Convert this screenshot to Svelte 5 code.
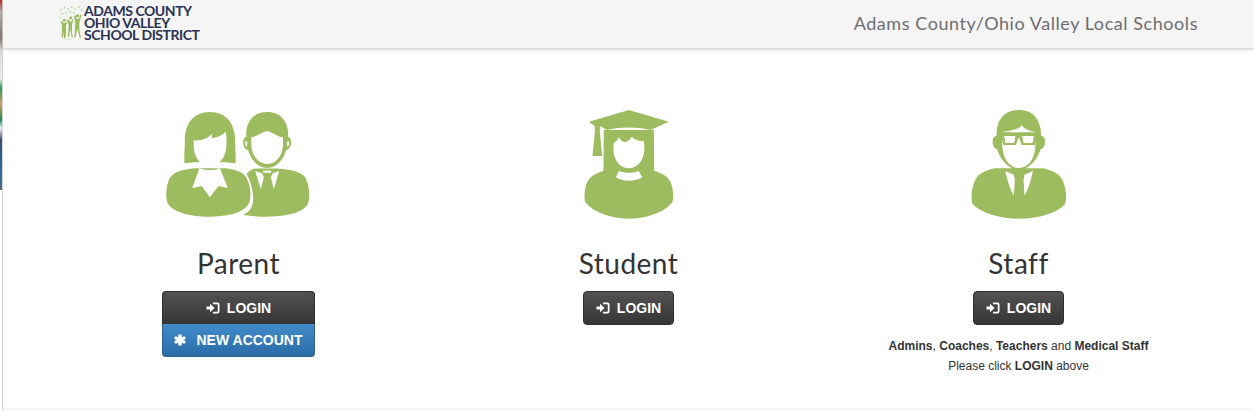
<script>
	const schools = 'Adams County/Ohio Valley Local Schools';
</script>

{#snippet loginIcon()}
	<svg class="glyph" viewBox="0 0 14 14" aria-hidden="true">
		<path d="M0.5 5.5H4V2.8L8.6 7L4 11.2V8.5H0.5Z" />
		<path d="M7 1.5H11.5Q13.5 1.5 13.5 3.5V10.5Q13.5 12.5 11.5 12.5H7V10.8H11Q11.8 10.8 11.8 10V4Q11.8 3.2 11 3.2H7Z" />
	</svg>
{/snippet}

<div class="screen">
	<div class="edge"></div>
	<div class="page">
		<header>
			<div class="logo">
				<svg class="logo-mark" viewBox="0 0 72 105" aria-hidden="true">
					<g fill="#c5d8a4">
						<circle cx="6" cy="14" r="3" /><circle cx="16" cy="8" r="3" /><circle cx="27" cy="12" r="3" />
						<circle cx="38" cy="6" r="3" /><circle cx="48" cy="11" r="3" /><circle cx="60" cy="7" r="3" />
						<circle cx="68" cy="14" r="3" /><circle cx="10" cy="26" r="3" /><circle cx="22" cy="24" r="3" />
						<circle cx="34" cy="20" r="3" /><circle cx="44" cy="24" r="3" /><circle cx="4" cy="38" r="2.5" />
					</g>
					<g fill="#9dbc60">
						<path d="M10 48l4 6h6l4-6 2 2-5 10v30l-3 10h-3l-2-18-2 16H8l1-38-4-10Z" />
						<path d="M30 42l3 8h4l3-8 3 1-4 16v24l3 14h-4l-4-24-4 24h-3l2-38-4-14Z" />
						<path d="M50 30l3 12h6l6-14 3 2-7 22v24l5 22h-4l-7-26-6 26h-3l3-44-4-20Z" />
						<circle cx="16" cy="46" r="4.5" /><circle cx="35" cy="38" r="4.5" /><circle cx="56" cy="32" r="5" />
					</g>
					<path d="M6 95Q18 106 40 102" fill="none" stroke="#d5e3bf" stroke-width="2" />
				</svg>
				<div class="logo-text">
					<span>ADAMS COUNTY</span>
					<span>OHIO VALLEY</span>
					<span>SCHOOL DISTRICT</span>
				</div>
			</div>
			<div class="title">{schools}</div>
		</header>

		<main>
			<section>
				<svg class="figure" viewBox="-4.5 0 540 390" aria-hidden="true">
					<path class="g" d="M178 36C128 36 103 72 103 122C103 150 100 172 102 190L135 187L222 187L255 190C257 172 254 150 254 122C254 72 228 36 178 36Z" />
					<path class="g" d="M130 205C90 211 62 216 53 245C46 270 44 298 54 314C78 343 138 350 178 350C222 350 272 342 292 316C306 298 300 255 287 232C276 214 250 209 226 205Z" />
					<path class="w" d="M130 121C152 122 172 118 186 99L183 115C200 112 216 105 226 95C229 115 229 135 226 152C220 180 200 199 178 199C156 199 136 180 131 152C129 140 129 130 130 121Z" />
					<path class="w" d="M147 204C156 212 200 212 208 204L232 264L204 258L178 292L153 258L125 265Z" />
					<path class="g" d="M350 36C305 36 285 70 287 110C274 113 274 148 293 150C300 176 320 204 350 204C380 204 400 176 407 150C426 148 426 113 413 110C415 70 395 36 350 36Z" />
					<path class="w" d="M303 112C320 109 335 96 350 92C365 96 380 109 397 112C399 128 397 145 394 156C386 178 370 192 350 192C330 192 314 178 306 156C303 145 301 128 303 112Z" />
					<path class="w" d="M285 123C283 129 284 137 289 141L291 126ZM415 123C417 129 416 137 411 141L409 126Z" />
					<path class="g" d="M310 206C322 205 378 205 392 206C420 210 452 214 464 232C476 254 482 296 470 316C450 342 396 350 350 350C325 350 300 348 278 345C298 335 310 320 308 290C306 262 298 238 288 222C295 214 302 208 310 206Z" />
					<path class="w" d="M314 213L334 220L340 232L331 268ZM386 213L367 220L361 232L370 268Z" />
					<path class="w" d="M338 212H362V218H338Z" />
				</svg>
				<h2>Parent</h2>
				<div class="stack">
					<a class="btn dark wide" href="#login">{@render loginIcon()}LOGIN</a>
					<a class="btn blue wide" href="#new">
						<svg class="glyph star" viewBox="0 0 14 14" aria-hidden="true">
							<path d="M5 0.5H9V4.2L12 2.2L14 5.5L10.8 7L14 8.5L12 11.8L9 9.8V13.5H5V9.8L2 11.8L0 8.5L3.2 7L0 5.5L2 2.2L5 4.2Z" />
						</svg>
						NEW ACCOUNT
					</a>
				</div>
			</section>

			<section>
				<svg class="figure narrow" viewBox="-4.5 0 420 390" aria-hidden="true">
					<path class="g" d="M130 90H280L281 200C281 215 282 225 284 232H126C128 225 129 215 129 200Z" />
					<path class="g" d="M85 65L205 30L325 65L270 90C230 80 180 80 140 90L118 78L118 90Z" />
					<path class="g" d="M103 72H115L118 95L125 168H96L103 95Z" />
					<path class="w" d="M160 128C166 127 170 122 174 112C180 120 185 125 192 127C200 125 208 120 214 110C224 122 240 124 250 122C253 140 252 158 247 172C240 192 224 205 205 205C186 205 170 192 163 172C158 158 158 142 160 128Z" />
					<path class="g" d="M130 212C110 218 90 226 80 246C72 265 70 290 74 306C100 340 160 356 205 356C250 356 310 340 336 306C340 290 338 265 330 246C320 226 300 218 280 212Z" />
					<path class="w" d="M176 212C186 220 224 220 234 212L245 232C225 246 186 246 166 232Z" />
				</svg>
				<h2>Student</h2>
				<a class="btn dark solo" href="#login">{@render loginIcon()}LOGIN</a>
			</section>

			<section>
				<svg class="figure narrow" viewBox="-4.5 0 420 390" aria-hidden="true">
					<path class="g" d="M205 30C160 30 138 60 138 108C122 108 122 142 140 148C148 178 176 210 205 210C234 210 262 178 270 148C288 142 288 108 272 108C272 60 250 30 205 30Z" />
					<path class="w" d="M156 96C180 92 205 88 214 76C222 88 240 94 254 96C256 115 256 140 252 158C245 188 225 204 205 204C185 204 165 188 158 158C154 140 154 115 156 96Z" />
					<path class="g" d="M150 97H260V104L254 135H214L205 112L196 135H158L152 106Z" />
					<path class="w" d="M161 108H195L191 129H165ZM215 108H250L246 129H219Z" />
					<path class="g" d="M130 205C105 214 85 218 74 240C64 262 60 290 66 312C95 342 155 356 205 356C258 356 318 342 344 312C350 290 346 262 336 240C325 218 305 214 280 205Z" />
					<path class="w" d="M165 213L190 224L193 240L190 286C178 268 170 240 165 213ZM247 213L222 224L219 240L222 286C234 268 242 240 247 213Z" />
				</svg>
				<h2>Staff</h2>
				<a class="btn dark solo" href="#login">{@render loginIcon()}LOGIN</a>
				<div class="note">
					<p><b>Admins</b>, <b>Coaches</b>, <b>Teachers</b> and <b>Medical Staff</b></p>
					<p>Please click <b>LOGIN</b> above</p>
				</div>
			</section>
		</main>
		<footer></footer>
	</div>
</div>

<style>
	:global(body) {
		background: #fff;
	}

	.screen {
		display: flex;
		height: 411px;
		overflow: hidden;
		font-family: 'Liberation Sans', Arial, sans-serif;
	}

	.edge {
		flex: 0 0 3px;
		box-sizing: border-box;
		border-right: 1px solid #d4d4d4;
		background: linear-gradient(
				#c8282a 0,
				#b9b4ac 12px,
				#8a7a70 38px,
				#d8d8d8 50px,
				#eeeeee 78px,
				#2e9a58 88px,
				#d89a5a 104px,
				#1e8a50 120px,
				#eef2f4 128px,
				#33506e 140px,
				#2e6a9c 170px,
				#516c88 190px
			)
			no-repeat 0 0 / 100% 190px;
	}

	.page {
		flex: 1;
		display: flex;
		flex-direction: column;
		min-width: 0;
	}

	header {
		display: flex;
		align-items: flex-start;
		justify-content: space-between;
		height: 48px;
		padding: 0 56px;
		background: #f5f5f5;
		box-shadow: 0 1px 4px rgba(0, 0, 0, 0.25);
	}

	.logo {
		display: flex;
		align-items: flex-start;
		gap: 1px;
		padding-top: 5px;
	}

	.logo-mark {
		width: 24px;
		height: 35px;
		display: block;
	}

	.logo-text {
		display: flex;
		flex-direction: column;
		font-family: Lato, sans-serif;
		font-weight: 700;
		font-size: 14px;
		line-height: 12px;
		letter-spacing: -0.45px;
		color: #2b3252;
	}

	.title {
		padding-top: 12px;
		font-family: Lato, sans-serif;
		font-size: 18px;
		line-height: 22px;
		letter-spacing: 0.56px;
		color: #6e6e6e;
	}

	main {
		flex: 1;
		display: grid;
		grid-template-columns: repeat(3, 390px);
		justify-content: center;
		padding-top: 52px;
	}

	section {
		display: flex;
		flex-direction: column;
		align-items: center;
		color: #333;
	}

	.figure {
		display: block;
		width: 180px;
		height: 130px;
	}

	.figure.narrow {
		width: 140px;
	}

	.g {
		fill: #9dbc60;
	}

	.w {
		fill: #fff;
	}

	h2 {
		margin: 15px 0 10px;
		font-family: Lato, sans-serif;
		font-weight: 400;
		font-size: 28px;
		line-height: 36px;
		letter-spacing: 0.5px;
		color: #333;
	}

	.stack {
		display: flex;
		flex-direction: column;
		width: 153px;
	}

	.btn {
		display: flex;
		align-items: center;
		justify-content: center;
		gap: 7px;
		box-sizing: border-box;
		height: 33px;
		font-weight: 700;
		font-size: 14px;
		color: #fff;
		text-decoration: none;
		border: 1px solid #2e2e2e;
	}

	.dark {
		background: linear-gradient(#525252, #363636);
	}

	.blue {
		background: linear-gradient(#428bca, #2a6ca6);
		border-color: #2b5f8e;
		border-top: 0;
		gap: 10px;
	}

	.wide.dark {
		border-radius: 4px 4px 0 0;
		border-bottom: 0;
	}

	.wide.blue {
		border-radius: 0 0 4px 4px;
	}

	.solo {
		width: 91px;
		height: 34px;
		border-radius: 4px;
	}

	.glyph {
		display: block;
		width: 14px;
		height: 14px;
		fill: #fff;
	}

	.star {
		width: 12px;
		height: 12px;
	}

	.note {
		margin-top: 11px;
		font-size: 12px;
		line-height: 20px;
		text-align: center;
		color: #333;
	}

	.note p {
		margin: 0;
	}

	footer {
		height: 3px;
		background: #f8f8f8;
	}
</style>
